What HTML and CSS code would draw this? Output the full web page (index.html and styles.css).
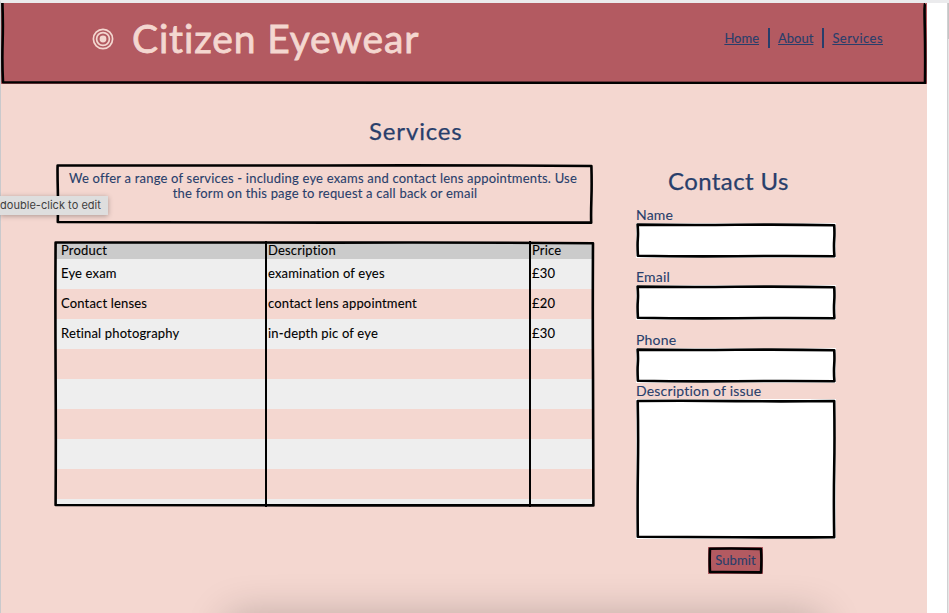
FILE: index.html
```html
<!DOCTYPE html>
<html lang="en">
<head>
<meta charset="utf-8">
<title>Citizen Eyewear</title>
<link rel="stylesheet" href="styles.css">
</head>
<body>
<div class="window">
  <div class="page">
    <header class="header">
      <svg class="logo" viewBox="0 0 22 22"><circle cx="11" cy="11" r="9.6"/><circle cx="11" cy="11" r="6.4"/><circle class="dot" cx="11" cy="11" r="3.4"/></svg>
      <h1 class="brand">Citizen Eyewear</h1>
      <nav class="nav"><a href="#">Home</a><a href="#">About</a><a class="wide" href="#">Services</a></nav>
      <svg class="sketch" viewBox="0 0 926 81"><path d="M1.4 0Q2.2 20 1.6 40T2 79.2Q230 80.2 460 79.8T924 80Q924.4 50 923.8 25T924 0"/></svg>
    </header>
    <div class="content">
      <main class="main">
        <h2 class="heading">Services</h2>
        <div class="intro">
          <p>We offer a range of services - including eye exams and contact lens appointments. Use<br><span class="second">the form on this page to request a call back or email</span></p>
          <svg class="sketch" viewBox="0 0 537 60"><path d="M1.6 1.5Q140 1.9 270 1.5T535.4 2Q535.9 20 535.4 35T535.2 58.6Q400 59 270 58.6T1.8 58Q2.2 40 1.8 25T1.6 1.5Z"/></svg>
        </div>
        <div class="table">
          <div class="row head"><span>Product</span><span>Description</span><span>Price</span></div>
          <div class="row"><span>Eye exam</span><span>examination of eyes</span><span>£30</span></div>
          <div class="row"><span>Contact lenses</span><span>contact lens appointment</span><span>£20</span></div>
          <div class="row"><span>Retinal photography</span><span>in-depth pic of eye</span><span>£30</span></div>
          <div class="row"></div>
          <div class="row"></div>
          <div class="row"></div>
          <div class="row"></div>
          <div class="row"></div>
          <div class="row last"></div>
          <svg class="sketch" viewBox="0 0 541 266"><path d="M1.6 1.5Q140 2 280 1.6T539 2.2Q538.6 70 539 130T539.4 264.4Q400 264 270 264.4T1.6 264Q2 200 1.6 130T1.6 1.5Z"/><path class="rule" d="M212 0V266M476 0V266"/></svg>
        </div>
      </main>
      <form class="contact">
        <h2 class="heading">Contact Us</h2>
        <label class="label">Name</label>
        <div class="field"><svg class="sketch" preserveAspectRatio="none" viewBox="0 0 200 35"><path d="M1.6 1.6Q50 2.3 100 1.8T198.2 2.2Q198.7 10 198.2 17T198.4 33.2Q150 32.8 100 33.2T1.9 32.8Q1.3 22 1.8 16T1.6 1.6Z"/></svg></div>
        <label class="label email">Email</label>
        <div class="field"><svg class="sketch" preserveAspectRatio="none" viewBox="0 0 200 35"><path d="M1.6 1.6Q50 2.3 100 1.8T198.2 2.2Q198.7 10 198.2 17T198.4 33.2Q150 32.8 100 33.2T1.9 32.8Q1.3 22 1.8 16T1.6 1.6Z"/></svg></div>
        <label class="label phone">Phone</label>
        <div class="field"><svg class="sketch" preserveAspectRatio="none" viewBox="0 0 200 35"><path d="M1.6 1.6Q50 2.3 100 1.8T198.2 2.2Q198.7 10 198.2 17T198.4 33.2Q150 32.8 100 33.2T1.9 32.8Q1.3 22 1.8 16T1.6 1.6Z"/></svg></div>
        <label class="label">Description of issue</label>
        <div class="field area"><svg class="sketch" preserveAspectRatio="none" viewBox="0 0 200 140"><path d="M1.7 2Q50 1.6 100 2.1T198.2 2Q198.8 40 198.2 70T198.2 138.2Q150 138.6 100 138.2T1.8 137.8Q1.4 100 1.9 68T1.7 2Z"/></svg></div>
        <button class="submit" type="button">Submit<svg class="sketch" viewBox="0 0 55 27"><path d="M2 1.8Q26 1.2 53 2Q53.8 13 53 25.4Q28 24.8 2 25Q1.4 13 2 1.8Z"/></svg></button>
      </form>
    </div>
  </div>
  <div class="scrollbar"><div class="thumb"></div></div>
</div>
<div class="tooltip">double-click to edit</div>
<div class="dock-shadow"></div>
</body>
</html>
```
FILE: styles.css
```css
* { box-sizing: border-box; }
body {
  margin: 0;
  height: 613px;
  overflow: hidden;
  background: #fff;
  color: #283e6b;
  font: 13px/15px Lato, "Liberation Sans", sans-serif;
  letter-spacing: .17px;
  -webkit-text-stroke: .1px;
}
h1, h2, p { margin: 0; font-weight: 400; }
.window {
  display: flex;
  justify-content: space-between;
  height: 613px;
  border-top: 3px solid #ebebed;
  border-left: 1px solid #c9c9cc;
}
.page { width: 926px; background: #f4d7d0; }
.scrollbar { width: 2px; background: #e6e6e6; border-left: 1px solid #d0d0d2; }
.thumb { height: 36px; background: #c4c4c4; }

.sketch {
  position: absolute;
  inset: 0;
  width: 100%;
  height: 100%;
  fill: none;
  stroke: #000;
  stroke-width: 2.6;
  stroke-linejoin: round;
  pointer-events: none;
}
.sketch .rule { stroke-width: 2; }

.header {
  position: relative;
  display: flex;
  align-items: center;
  height: 81px;
  padding: 0 44px 10px 91px;
  background: #b35a61;
}
.logo { width: 22px; height: 22px; fill: none; stroke: #f4d7d0; stroke-width: 1.7; }
.logo .dot { fill: #f4d7d0; stroke: none; }
.brand {
  margin: 0 0 0 18px;
  color: #f4d7d0;
  font-size: 39px;
  line-height: 47px;
  letter-spacing: .85px;
  -webkit-text-stroke: .8px;
}
.nav { display: flex; align-items: center; margin: -1px 0 0 auto; }
.nav a { color: inherit; line-height: 20px; letter-spacing: 0; text-decoration-thickness: 1px; }
.nav a.wide { letter-spacing: .45px; }
.nav a + a { margin-left: 9px; padding-left: 8px; border-left: 2px solid #283e6b; }

.content { display: flex; }
.main { width: 541px; margin-left: 53px; padding-top: 32px; }
.heading { font-size: 24px; line-height: 29px; -webkit-text-stroke: .25px; }
.main .heading { padding-left: 315px; letter-spacing: .85px; }
.intro {
  position: relative;
  width: 537px;
  height: 60px;
  margin: 19px 0 0 2px;
  padding-top: 7px;
  text-align: center;
  white-space: nowrap;
}
.intro p { margin-right: 3px; letter-spacing: .2px; }
.intro .second { padding-left: 4px; }

.table {
  position: relative;
  height: 266px;
  margin-top: 17px;
  padding-top: 1px;
  color: #000;
}
.row {
  display: grid;
  grid-template-columns: 207px 264px 62px;
  align-items: center;
  height: 30px;
  margin: 0 1px;
  padding: 0 0 2px 6px;
  background: #f4d7d0;
}
.row:nth-child(even) { background: #eee; }
.row.head { height: 17px; padding-bottom: 0; background: #cbcbcb; }
.row.last { height: 7px; }

.contact { width: 200px; margin-left: 41px; padding-top: 82px; }
.contact .heading { padding-left: 32px; margin-bottom: 11px; letter-spacing: .4px; }
.label { display: block; height: 18px; font-size: 14px; line-height: 18px; letter-spacing: .2px; }
.label.email { margin-top: 11px; }
.label.phone { margin-top: 12px; }
.field { position: relative; height: 35px; margin: -1px 0; background: #fff; }
.field.area { height: 140px; }
.submit {
  position: relative;
  display: block;
  width: 55px;
  height: 27px;
  margin: 9px 0 0 72px;
  padding: 0;
  border: 0;
  background: #b35a61;
  color: inherit;
  font: inherit;
  letter-spacing: .1px;
}

.tooltip {
  position: absolute;
  top: 196px;
  left: 0;
  width: 108px;
  height: 19px;
  background: #dedede;
  box-shadow: 0 1px 5px rgba(0, 0, 0, .3);
  color: #404040;
  font: 11px/19px Inter, "Liberation Sans", sans-serif;
  letter-spacing: .03px;
  -webkit-text-stroke: 0;
}
.dock-shadow {
  position: fixed;
  top: 620px;
  left: 232px;
  width: 585px;
  height: 60px;
  box-shadow: 0 0 42px 4px rgba(0, 0, 0, .24);
}
```
